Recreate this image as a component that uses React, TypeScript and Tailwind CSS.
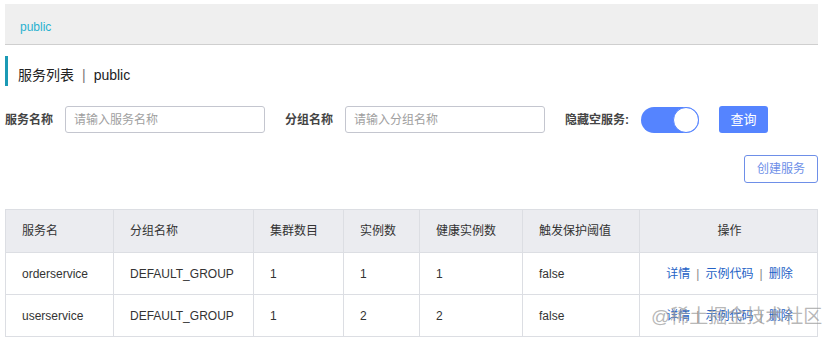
import React from "react";

const font = { fontFamily: '"Liberation Sans", "Noto Sans CJK SC", Arial, sans-serif' };

const cols = [
  { title: "服务名", w: "w-[108px]" },
  { title: "分组名称", w: "w-[140px]" },
  { title: "集群数目", w: "w-[90px]" },
  { title: "实例数", w: "w-[76px]" },
  { title: "健康实例数", w: "w-[103px]" },
  { title: "触发保护阈值", w: "w-[117px]" },
  { title: "操作", w: "w-[179px]" },
];

const rows = [
  ["orderservice", "DEFAULT_GROUP", "1", "1", "1", "false"],
  ["userservice", "DEFAULT_GROUP", "1", "2", "2", "false"],
];

export default function App() {
  return (
    <div className="relative w-[829px] h-[343px] bg-white overflow-hidden text-[#333]" style={font}>
      <div className="pt-[4px] pl-[5px] w-[818px]">
        {/* header */}
        <div className="h-[41px] bg-[#efefef] border-b border-[#cfcfcf] flex items-center pl-[15px] pt-[6px]">
          <span className="text-[12px] text-[#2ab2d0]">public</span>
        </div>

        {/* title */}
        <div className="mt-[11px] h-[30px] border-l-[3px] border-[#1b9ab5] flex items-center pl-[10px] pt-[8px] text-[14px] text-[#222]">
          <span>服务列表</span>
          <span className="mx-[8px] text-[#777]">|</span>
          <span>public</span>
        </div>

        {/* filter */}
        <div className="mt-[20px] h-[27px] flex items-center text-[12px]">
          <span className="font-bold text-[#444] w-[60px]">服务名称</span>
          <div className="w-[200px] h-[27px] border border-[#c4c6cf] rounded-[3px] flex items-center pl-[8px] text-[#a0a0a0]">
            请输入服务名称
          </div>
          <span className="font-bold text-[#444] ml-[20px] w-[60px]">分组名称</span>
          <div className="w-[200px] h-[27px] border border-[#c4c6cf] rounded-[3px] flex items-center pl-[8px] text-[#a0a0a0]">
            请输入分组名称
          </div>
          <span className="font-bold text-[#444] ml-[20px] w-[76px]">隐藏空服务:</span>
          <div className="w-[58px] h-[26px] rounded-full bg-[#5584ff] flex items-center justify-end">
            <div className="w-[26px] h-[26px] rounded-full bg-white border border-[#5584ff]" />
          </div>
          <div className="ml-[20px] w-[49px] h-[27px] rounded-[3px] bg-[#5584ff] text-white text-[13px] flex items-center justify-center">
            查询
          </div>
        </div>

        {/* create */}
        <div className="mt-[22px] flex justify-end">
          <div className="w-[74px] h-[28px] border border-[#6e8fe8] rounded-[3px] text-[#6e8fe8] text-[12px] flex items-center justify-center">
            创建服务
          </div>
        </div>

        {/* table */}
        <div className="mt-[26px] border border-[#dcdee3] text-[12px]">
          <div className="flex h-[42px] bg-[#ebecf0]">
            {cols.map((c, i) => (
              <div
                key={c.title}
                className={`${c.w} shrink-0 flex items-center ${i === 6 ? "justify-center" : "pl-[16px]"} ${i < 6 ? "border-r border-[#dcdee3]" : ""}`}
              >
                {c.title}
              </div>
            ))}
          </div>
          {rows.map((r, ri) => (
            <div key={ri} className="flex h-[42px] border-t border-[#dcdee3] bg-white">
              {r.map((v, i) => (
                <div key={i} className={`${cols[i].w} shrink-0 flex items-center pl-[16px] border-r border-[#dcdee3]`}>
                  {v}
                </div>
              ))}
              <div className="w-[179px] shrink-0 flex items-center justify-center text-[12px]">
                <span className="text-[#2462c6]">详情</span>
                <span className="mx-[6px] text-[#888]">|</span>
                <span className="text-[#2462c6]">示例代码</span>
                <span className="mx-[6px] text-[#888]">|</span>
                <span className="text-[#2462c6]">删除</span>
              </div>
            </div>
          ))}
        </div>
      </div>

      {/* watermark */}
      <div className="absolute left-[651px] top-[303px] text-[19px] text-[#999]/70 whitespace-nowrap">
        @稀土掘金技术社区
      </div>
    </div>
  );
}
